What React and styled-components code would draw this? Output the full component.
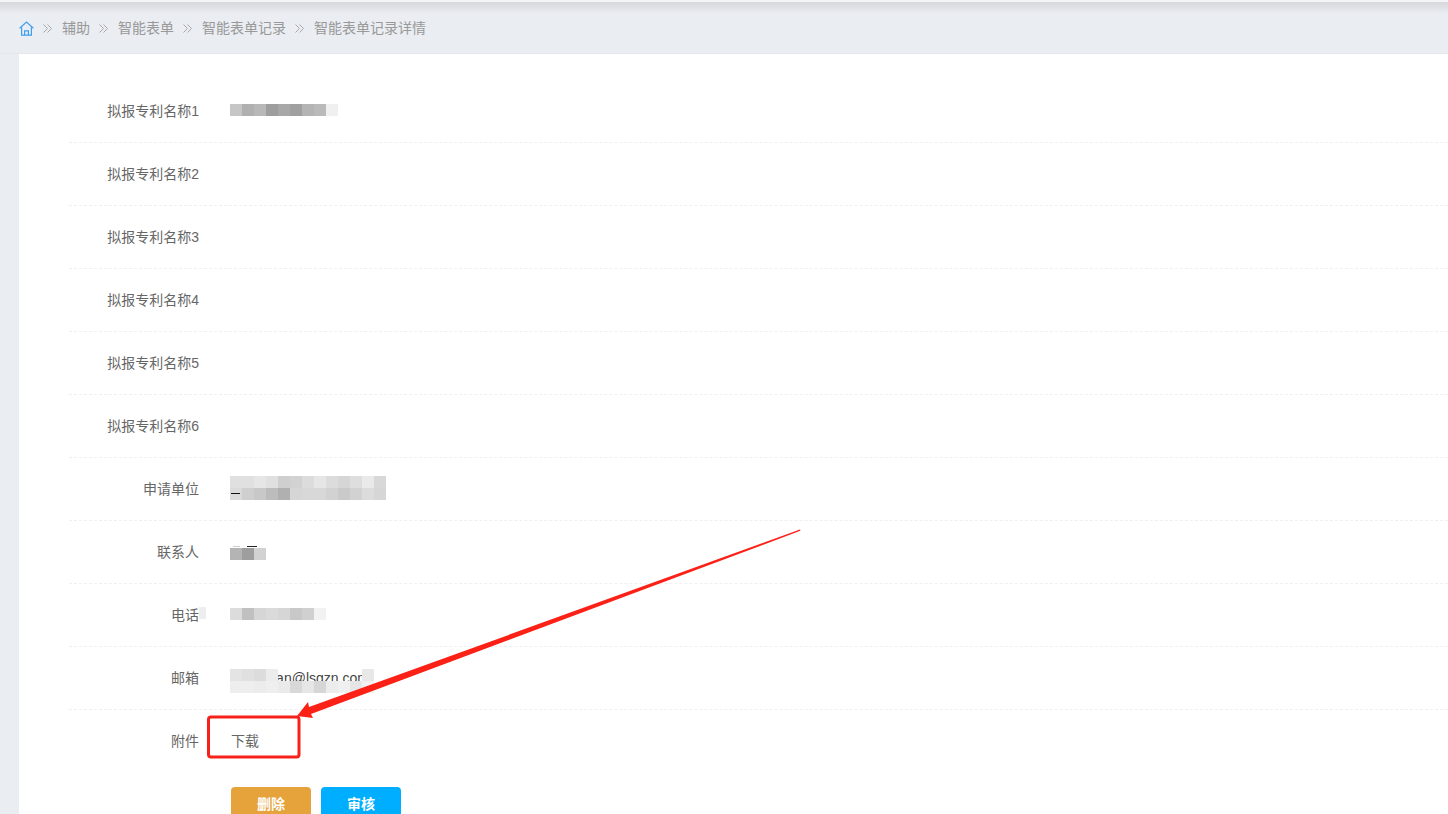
import React from "react";
import styled, { createGlobalStyle } from "styled-components";

const GlobalStyle = createGlobalStyle`
  html, body {
    margin: 0;
    padding: 0;
    height: 100%;
    overflow: hidden;
    background: #eaedf2;
  }
  * {
    box-sizing: border-box;
  }
`;

const Page = styled.div`
  position: relative;
  width: 1448px;
  height: 814px;
  overflow: hidden;
  background: #eaedf2;
  font-family: "Liberation Sans", "Noto Sans CJK SC", sans-serif;
  font-size: 14px;
`;

const TopShade = styled.div`
  position: absolute;
  top: 0;
  left: 0;
  right: 0;
  height: 14px;
  border-top: 2px solid #f4f5f7;
  background: linear-gradient(#d6d8dc, #eaedf2);
`;

const Breadcrumb = styled.nav`
  position: relative;
  height: 54px;
  padding: 3px 0 0 19px;
  display: flex;
  align-items: center;
  color: #999;
  border-bottom: 1px solid #e4e7ec;
`;

const Crumb = styled.span`
  line-height: 20px;
`;

const Separator = styled.svg`
  width: 9px;
  height: 9px;
  margin: 0 10px 0 9px;
  fill: none;
  stroke: #a8a8a8;
  stroke-width: 1;
`;

const Card = styled.main`
  margin-left: 19px;
  height: 760px;
  padding: 26px 0 0 50px;
  background: #fff;
`;

const Row = styled.div`
  height: 63px;
  display: flex;
  align-items: center;
  padding-bottom: 1px;
  border-bottom: 1px dashed #eef0f2;
  ${({ $last }) => $last && "border-bottom: none;"}
`;

const Label = styled.label`
  position: relative;
  width: 130px;
  text-align: right;
  color: #666;
  line-height: 20px;
`;

const Value = styled.div`
  position: relative;
  margin-left: 32px;
  color: #666;
  line-height: 20px;
`;

const Mosaic = styled.div`
  position: relative;
  display: grid;
  grid-template-columns: repeat(${({ $cols }) => $cols}, 12px);
  grid-auto-rows: 12px;
  margin: ${({ $top }) => $top ?? -2}px 0 0 -1px;
`;

const Cell = styled.i`
  display: block;
  background: ${({ $c }) => $c};
`;

const MailText = styled.span`
  position: absolute;
  left: 42px;
  top: 5px;
  white-space: nowrap;
  color: #444;
`;

const Smudge = styled.i`
  position: absolute;
  left: ${({ $left }) => $left}px;
  top: ${({ $y }) => $y}px;
  width: ${({ $w }) => $w}px;
  height: 1px;
  background: ${({ $c }) => $c};
`;

const LabelPatch = styled.i`
  position: absolute;
  right: -7px;
  top: 2px;
  width: 7px;
  height: 12px;
  background: #eeeeee;
`;

const Actions = styled.div`
  display: flex;
  gap: 10px;
  margin: 14px 0 0 162px;
`;

const Button = styled.button`
  width: 80px;
  height: 32px;
  padding: 0;
  border: none;
  border-radius: 4px;
  color: #fff;
  font: bold 14px "Liberation Sans", "Noto Sans CJK SC", sans-serif;
  background: ${({ $color }) => $color};
`;

const Markup = styled.svg`
  position: absolute;
  top: 0;
  left: 0;
  width: 1448px;
  height: 814px;
  pointer-events: none;
`;

const HomeIcon = styled.svg`
  width: 15px;
  height: 15px;
  fill: none;
  stroke: #3f9ff0;
  stroke-width: 1.2;
`;

const Chevrons = () => (
  <Separator viewBox="0 0 9 9">
    <path d="M0.5 0.5 4.5 4.5 0.5 8.5M4.5 0.5 8.5 4.5 4.5 8.5" />
  </Separator>
);

const Blur = ({ colors, cols, top, children }) => (
  <Mosaic $cols={cols} $top={top}>
    {colors.map((c, i) => (
      <Cell key={i} $c={c} />
    ))}
    {children}
  </Mosaic>
);

const patents = [1, 2, 3, 4, 5, 6];

const App = () => (
  <Page>
    <GlobalStyle />
    <TopShade />
    <Breadcrumb>
      <HomeIcon viewBox="0 0 15 15">
        <path d="M0.6 7.2 7.5 1l6.9 6.2" />
        <path d="M2.6 6.2v8h9.8v-8" />
        <path d="M5.6 14.2v-4.4h3.8v4.4" />
      </HomeIcon>
      <Chevrons />
      <Crumb>辅助</Crumb>
      <Chevrons />
      <Crumb>智能表单</Crumb>
      <Chevrons />
      <Crumb>智能表单记录</Crumb>
      <Chevrons />
      <Crumb>智能表单记录详情</Crumb>
    </Breadcrumb>
    <Card>
      {patents.map((n) => (
        <Row key={n}>
          <Label>拟报专利名称{n}</Label>
          {n === 1 && (
            <Value>
              <Blur
                cols={9}
                colors={["#c6c6c6", "#b0b0b0", "#b8b8b8", "#9e9e9e", "#a8a8a8", "#a0a0a0", "#b4b4b4", "#bababa", "#f0f0f0"]}
              />
            </Value>
          )}
        </Row>
      ))}
      <Row>
        <Label>申请单位</Label>
        <Value>
          <Blur
            cols={13}
            colors={[
              "#e0e0e0", "#e0e0e0", "#e6e6e6", "#e0e0e0", "#cfcfcf", "#d2d2d2", "#dcdcdc", "#e6e6e6", "#dcdcdc", "#d6d6d6", "#dedede", "#eaeaea", "#d8d8d8",
              "#dadada", "#cfcfcf", "#c8c8c8", "#bcbcbc", "#b0b0b0", "#d6d6d6", "#d8d8d8", "#d8d8d8", "#d2d2d2", "#cacaca", "#d2d2d2", "#dcdcdc", "#d6d6d6",
            ]}
          >
            <Smudge $left={1} $y={17} $w={9} $c="#111" />
          </Blur>
        </Value>
      </Row>
      <Row>
        <Label>联系人</Label>
        <Value>
          <Blur top={4} cols={3} colors={["#b4b4b4", "#9e9e9e", "#d2d2d2"]}>
            <Smudge $left={3} $y={-2} $w={7} $c="#ccc" />
            <Smudge $left={17} $y={-2} $w={10} $c="#222" />
          </Blur>
        </Value>
      </Row>
      <Row>
        <Label>
          电话
          <LabelPatch />
        </Label>
        <Value>
          <Blur
            cols={8}
            colors={["#dcdcdc", "#c0c0c0", "#d6d6d6", "#dadada", "#d6d6d6", "#c8c8c8", "#d0d0d0", "#f2f2f2"]}
          />
        </Value>
      </Row>
      <Row>
        <Label>邮箱</Label>
        <Value>
          <MailText>ian@lsqzn.com</MailText>
          <Blur
            top={6}
            cols={12}
            colors={[
              "#e4e4e4", "#e0e0e0", "#dcdcdc", "#ececec", "transparent", "transparent", "transparent", "transparent", "transparent", "transparent", "transparent", "#e8e8e8",
              "#eeeeee", "#eeeeee", "#ececec", "#efefef", "#eaeaea", "#d8d8d8", "#e6e6e6", "#d6d6d6", "#ececec", "#f0f0f0", "#e6e6e6", "#f2f2f2",
            ]}
          />
        </Value>
      </Row>
      <Row $last>
        <Label>附件</Label>
        <Value>下载</Value>
      </Row>
      <Actions>
        <Button $color="#e6a33c">删除</Button>
        <Button $color="#00aeff">审核</Button>
      </Actions>
    </Card>
    <Markup viewBox="0 0 1448 814">
      <rect x="208.5" y="717" width="90.5" height="40" rx="2.5" fill="none" stroke="#f5211a" strokeWidth="3" />
      <path d="M800 529.6 800.4 530.8 311 714 313 718 297 716 308 702 309 707Z" fill="#fb2116" />
    </Markup>
  </Page>
);

export default App;
